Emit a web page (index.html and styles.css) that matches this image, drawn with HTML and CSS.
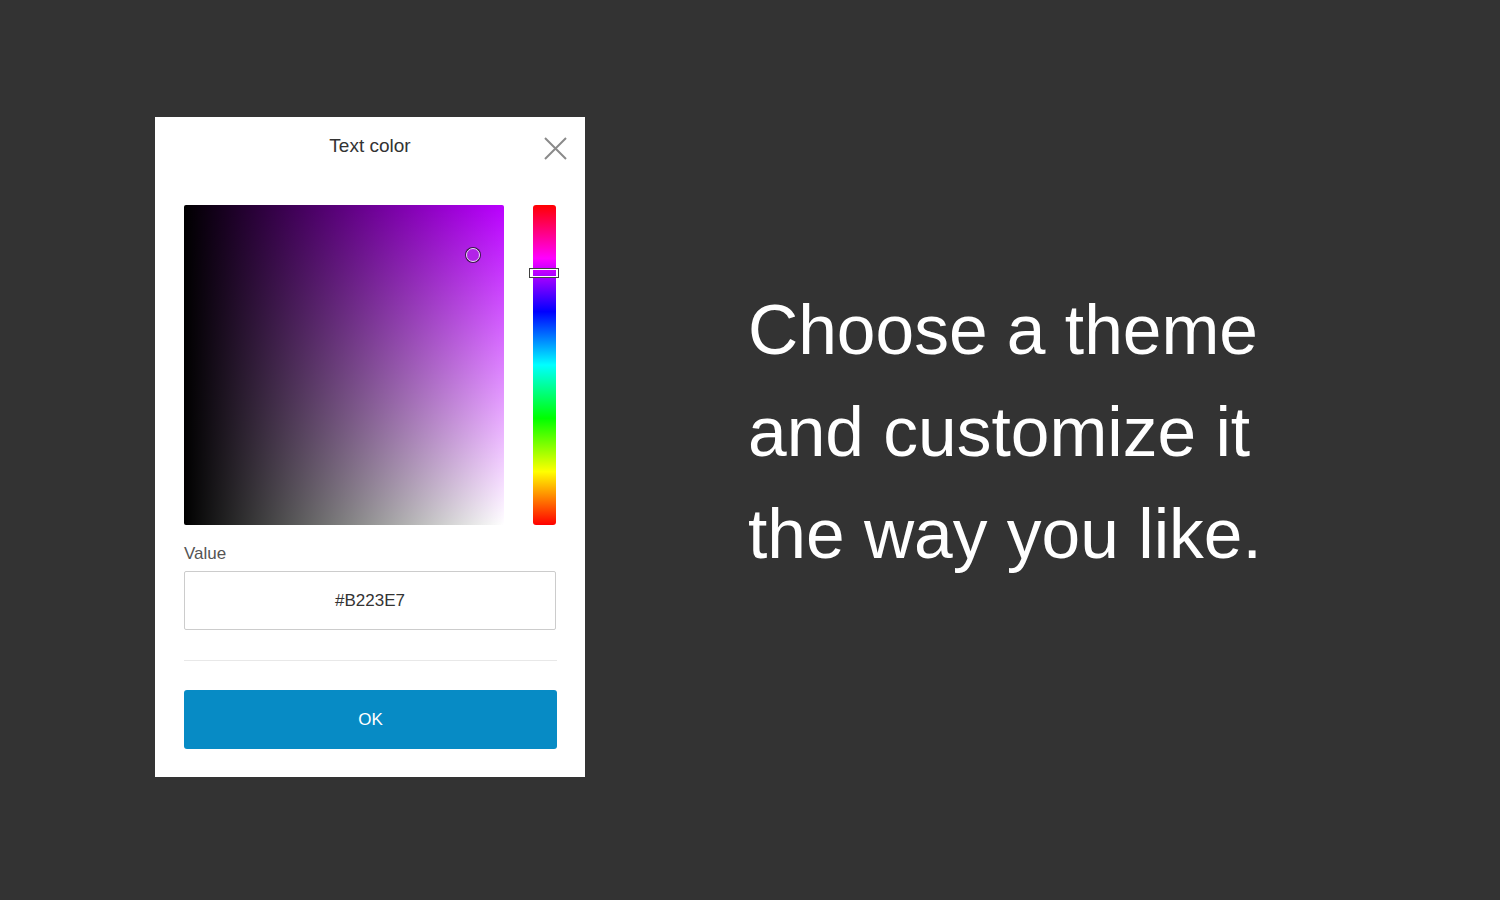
FILE: index.html
```html
<!DOCTYPE html>
<html>
<head>
<meta charset="utf-8">
<link rel="stylesheet" href="styles.css">
</head>
<body>
<div class="page">
  <div class="dialog">
    <div class="header">
      <span class="spacer"></span>
      <div class="title">Text color</div>
      <button class="close" aria-label="Close">
        <svg width="23" height="23" viewBox="0 0 23 23"><path d="M1 1 L22 22 M22 1 L1 22" stroke="#8a8a8a" stroke-width="2" fill="none"/></svg>
      </button>
    </div>
    <div class="picker">
      <div class="sat">
        <div class="marker"></div>
      </div>
      <div class="hue">
        <div class="hue-handle"></div>
      </div>
    </div>
    <label class="label">Value</label>
    <div class="input">#B223E7</div>
    <div class="divider"></div>
    <button class="ok">OK</button>
  </div>
  <div class="tagline">
    <div>Choose a theme</div>
    <div>and customize it</div>
    <div>the way you like.</div>
  </div>
</div>
</body>
</html>
```

FILE: styles.css
```css
html, body {
  margin: 0;
  padding: 0;
  background: #333333;
  font-family: "Liberation Sans", Arial, sans-serif;
}
.page {
  display: flex;
  align-items: flex-start;
  width: 1500px;
  height: 900px;
}
.dialog {
  margin-left: 155px;
  margin-top: 117px;
  width: 430px;
  box-sizing: border-box;
  background: #ffffff;
  padding: 0 29px 28px 29px;
  display: flex;
  flex-direction: column;
}
.header {
  height: 60px;
  display: grid;
  grid-template-columns: 23px 1fr 23px;
  align-items: center;
  margin-right: -11px;
}
.spacer { width: 23px; }
.title {
  text-align: center;
  font-size: 19px;
  color: #333333;
  margin-right: 11px;
  margin-top: -2px;
}
.close {
  width: 23px;
  height: 23px;
  padding: 0;
  border: 0;
  background: none;
  display: flex;
  margin-top: 2px;
}
.picker {
  margin-top: 28px;
  display: flex;
  gap: 29px;
  height: 320px;
}
.sat {
  position: relative;
  width: 320px;
  height: 320px;
  border-radius: 2px;
  background:
    linear-gradient(to right, #000000, rgba(0,0,0,0)),
    linear-gradient(to bottom, rgba(255,255,255,0), #ffffff),
    rgb(186, 0, 255);
}
.marker {
  position: absolute;
  left: 282px;
  top: 43px;
  width: 12px;
  height: 12px;
  border-radius: 50%;
  background: #b223e7;
  border: 1.5px solid #f0d8ff;
  box-shadow: 0 0 0 1px #3a1a48;
}
.hue {
  position: relative;
  width: 23px;
  height: 320px;
  border-radius: 3px;
  background: linear-gradient(to bottom,
    #ff0000 0%, #ff00ff 16.67%, #0000ff 33.33%, #00ffff 50%,
    #00ff00 66.67%, #ffff00 83.33%, #ff0000 100%);
}
.hue-handle {
  position: absolute;
  left: -4px;
  top: 63px;
  width: 28px;
  height: 8px;
  border: 1.5px solid #404040;
  box-shadow: inset 0 0 0 1px #ffffff;
}
.label {
  margin-top: 19px;
  font-size: 17px;
  line-height: 20px;
  color: #555555;
}
.input {
  margin-top: 7px;
  height: 57px;
  border: 1px solid #cccccc;
  border-radius: 2px;
  display: flex;
  align-items: center;
  justify-content: center;
  font-size: 17px;
  color: #333333;
}
.divider {
  margin-top: 30px;
  height: 1px;
  background: #e8e8e8;
  margin-right: -1px;
}
.ok {
  margin-top: 29px;
  margin-right: -1px;
  height: 59px;
  border: 0;
  border-radius: 3px;
  background: #078bc5;
  color: #ffffff;
  font-family: "Liberation Sans", Arial, sans-serif;
  font-size: 17px;
}
.tagline {
  margin-left: 163px;
  margin-top: 279px;
  font-size: 69.5px;
  line-height: 102px;
  color: #ffffff;
  white-space: nowrap;
}
```
